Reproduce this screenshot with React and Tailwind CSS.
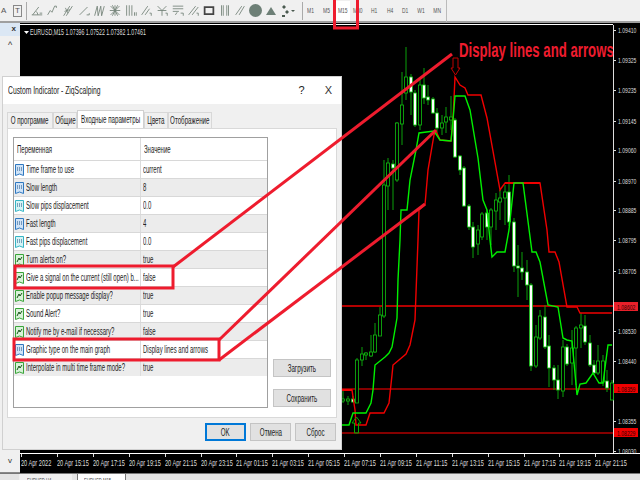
// App.jsx - MT4 chart with the indicator settings dialog on top
const FONT = "font-['Liberation_Sans',Arial,sans-serif]";

// x, wick top, body top, body bottom, wick bottom, type (h = hollow, w = white)
const candles = [
  [343, 391, 399, 401, 403, "h"], [348, 396, 399, 401, 405, "h"], [353, 396, 399, 402, 403, "w"],
  [357, 358, 360, 403, 403, "h"], [362, 347, 354, 360, 366, "h"], [366, 352, 353, 355, 360, "h"],
  [371, 335, 352, 356, 357, "h"], [375, 323, 335, 352, 353, "h"], [380, 307, 315, 336, 336, "h"],
  [384, 160, 185, 316, 318, "h"], [388, 158, 163, 186, 210, "h"], [393, 160, 164, 168, 210, "w"],
  [397, 122, 123, 180, 182, "h"], [402, 72, 105, 124, 145, "h"], [406, 47, 77, 93, 100, "h"],
  [411, 74, 77, 92, 115, "w"], [415, 90, 93, 125, 127, "w"], [420, 80, 85, 125, 130, "h"],
  [424, 68, 85, 98, 104, "w"], [428, 85, 97, 100, 105, "w"], [433, 97, 99, 113, 114, "w"],
  [437, 108, 113, 128, 135, "w"], [442, 115, 123, 128, 135, "h"], [446, 107, 117, 122, 133, "h"],
  [451, 96, 117, 120, 130, "h"], [455, 118, 120, 157, 158, "w"], [460, 155, 156, 170, 175, "w"],
  [464, 166, 168, 206, 207, "w"], [469, 204, 206, 227, 230, "w"], [473, 222, 227, 247, 258, "w"],
  [478, 225, 230, 244, 255, "h"], [482, 212, 214, 237, 240, "h"], [487, 210, 213, 227, 240, "w"],
  [491, 208, 210, 227, 245, "h"], [496, 193, 200, 211, 230, "h"], [500, 190, 198, 202, 220, "h"],
  [505, 185, 192, 198, 225, "h"], [509, 175, 192, 222, 226, "w"], [514, 218, 222, 266, 272, "w"],
  [518, 245, 266, 268, 297, "w"], [522, 252, 268, 272, 280, "w"], [527, 260, 272, 285, 300, "w"],
  [531, 283, 285, 366, 371, "w"], [536, 325, 337, 366, 368, "h"], [540, 310, 316, 338, 340, "h"],
  [545, 305, 317, 347, 349, "w"], [549, 335, 346, 368, 387, "w"], [554, 365, 368, 380, 390, "w"],
  [558, 365, 380, 390, 399, "w"], [563, 340, 347, 391, 397, "h"], [567, 344, 347, 364, 366, "w"],
  [572, 330, 348, 363, 385, "h"], [576, 326, 328, 348, 385, "h"], [581, 313, 325, 328, 348, "h"],
  [585, 315, 326, 342, 345, "w"], [590, 335, 343, 365, 367, "w"], [594, 360, 365, 373, 375, "w"],
  [598, 345, 361, 373, 375, "h"], [603, 355, 361, 382, 386, "h"], [607, 370, 381, 388, 392, "w"],
  [612, 380, 383, 400, 400, "h"],
];

const redLine =
  "340,390 352,390 355,410 356,425 366,425 370,413 384,413 389,403 392,375 393,365 406,354 410,345 415,320 418,240 419,210 425,205 428,170 434,135 436,131 440,140 451,141 453,120 455,77 460,85 465,88 468,95 481,95 487,118 500,190 505,183 540,183 547,230 549,252 555,252 559,262 567,307 577,307 580,313 612,313";

const greenLine =
  "340,425 349,425 353,413 366,413 371,403 373,390 375,365 385,357 389,353 392,347 397,318 398,280 400,240 401,210 407,210 410,180 416,150 419,133 434,131 440,140 451,141 453,120 455,96 465,96 470,110 478,158 483,200 487,210 490,240 492,257 497,252 505,252 509,230 512,202 514,183 523,183 532,252 536,252 540,262 548,305 558,307 563,338 567,340 572,341 577,395 580,384 586,383 593,373 599,383 603,383 608,345 612,345";

const priceLabels = [
  ["1.09410", 30], ["1.09325", 60], ["1.09235", 90], ["1.09145", 121], ["1.09060", 150],
  ["1.08970", 181], ["1.08885", 210], ["1.08795", 240], ["1.08705", 271], ["1.08530", 331],
  ["1.08440", 361], ["1.08355", 421], ["1.08030", 451],
];

const priceTags = [
  ["1.08602", 302, "#e8202a"],
  ["1.08359", 384, "#f00000"],
  ["1.08229", 428, "#f00000"],
];

const times = [
  "20 Apr 15:15", "20 Apr 17:15", "20 Apr 19:15", "20 Apr 21:15", "20 Apr 23:15",
  "21 Apr 01:15", "21 Apr 03:15", "21 Apr 05:15", "21 Apr 07:15", "21 Apr 09:15",
  "21 Apr 11:15", "21 Apr 13:15", "21 Apr 15:15", "21 Apr 17:15", "21 Apr 19:15", "21 Apr 21:15",
];

const periods = ["M1", "M5", "M15", "M30", "H1", "H4", "D1", "W1", "MN"];

const rows = [
  ["int", "Time frame to use", "current"],
  ["int", "Slow length", "8"],
  ["dbl", "Slow pips displacement", "0.0"],
  ["int", "Fast length", "4"],
  ["dbl", "Fast pips displacement", "0.0"],
  ["bool", "Turn alerts on?", "true"],
  ["bool", "Give a signal on the current (still open) b...", "false"],
  ["bool", "Enable popup message display?", "true"],
  ["bool", "Sound Alert?", "true"],
  ["bool", "Notify me by e-mail if necessary?", "false"],
  ["int", "Graphic type on the main graph", "Display lines and arrows"],
  ["bool", "Interpolate in multi time frame mode?", "true"],
];

const tabs = [
  ["О программе", "w-[46px]"],
  ["Общие", "w-[24px]"],
  ["Входные параметры", "w-[67px]"],
  ["Цвета", "w-[24px]"],
  ["Отображение", "w-[44px]"],
];

// toolbar drawing tools, left to right
const toolPaths = [
  "M2 13h12M3 13l7-9M9 13a6 6 0 0 0-2-4M11 11h3",
  "M3 13l3-5 2 2 3-7M11 3h2v2",
  "M3 14l7-11M6 14l7-11M4 9l6-2M5 5l3 6",
  "M3 13l9-9M11 13h3v-2",
  "M3 14l3-11 1 11 3-11 1 11 3-11",
  "M3 3l10 10M13 3L3 13M8 2v12M2 8h12M5 2l6 12M11 2L5 14",
  "M3 2v12M6 2v12M9 2v12M12 10v4M14 10v4",
  "M3 13l7-10M7 13l5-7M12 11h2v3",
  "M3 3l5 5 5-5M8 8v6M3 8h10M12 11h2v3",
  "M2 3h12M2 6h12M2 9h7M5 13l2-3M11 11h3v3",
  "M3 13l8-10M7 13l7-9M12 11h2v3",
  "M3 4h10v8H3z",
  "M4 2v12M6 2v12M10 2v12M12 2v12",
  "M3 13l7-10M7 13l6-10",
];

// the reference is a horizontally squeezed screenshot, so its text is narrow
function Squeezed({ children }) {
  return <span className="inline-block origin-left scale-x-[.6] whitespace-nowrap">{children}</span>;
}

function SqueezedCenter({ children }) {
  return <span className="inline-block shrink-0 origin-center scale-x-[.62] whitespace-nowrap">{children}</span>;
}

function ToolCell({ children }) {
  return <div className="flex h-[16px] w-[15.65px] items-center justify-center">{children}</div>;
}

function Toolbar() {
  return (
    <div className="flex h-[23px] items-center border-b-2 border-[#9f9f9f] bg-[#f0f0f0] text-[8px] text-[#555]">
      <span className="w-[10px] pl-[1px]">A</span>
      <span className="ml-[3px] flex h-[12px] w-[9px] items-center justify-center border border-[#888]">T</span>
      <span className="ml-[4px] h-[18px] w-px bg-[#aaa]" />
      <div className="ml-[2px] flex items-center">
        {toolPaths.map((d) => (
          <ToolCell key={d}>
            <svg width="14" height="15" viewBox="0 0 16 16" fill="none" stroke={d.startsWith("M3 4h") ? "#444" : "#76857a"} strokeWidth={d.startsWith("M3 4h") ? 2 : 1}>
              <path d={d} />
            </svg>
          </ToolCell>
        ))}
        <ToolCell>
          <span className="h-[13px] w-[13px] rounded-full bg-[#6d7f76]" />
        </ToolCell>
        <ToolCell>
          <span className="h-0 w-0 border-x-[5px] border-b-[8px] border-x-transparent border-b-[#6d7f76]" />
        </ToolCell>
        <ToolCell>
          <svg width="15" height="14" viewBox="0 0 15 14" fill="#4a5a50">
            <path d="M2 3l2-2 2 2-2 2zM5 8l2-2 2 2-2 2zM2 11h3v2H2z" />
            <path d="M11 6h4l-2 2z" />
          </svg>
        </ToolCell>
      </div>
      <span className="ml-[7px] h-[18px] w-px bg-[#aaa]" />
      <div className="flex items-center">
        {periods.map((p) => (
          <span
            key={p}
            className={
              p === "M15"
                ? "flex h-[20px] w-[15.8px] items-center justify-center bg-white"
                : "flex h-[20px] w-[15.8px] items-center justify-center"
            }
          >
            <SqueezedCenter>{p}</SqueezedCenter>
          </span>
        ))}
      </div>
      <span className="ml-px h-[22px] w-px bg-[#bbb]" />
    </div>
  );
}

function Sidebar() {
  return (
    <div className="flex h-full w-[20px] shrink-0 flex-col border-b border-[#888] bg-[#f0f0f0] text-[#333]">
      <div className="flex h-[13px] justify-end bg-[#dbe7f4] pr-[4px] text-[8px] font-bold">x</div>
      <div className="flex-1 pl-[8px] pt-[3px] text-[9px]">^</div>
      <div className="h-[17px] pl-[8px] text-[8px]">v</div>
    </div>
  );
}

function Chart() {
  return (
    <svg width="620" height="431" viewBox="20 23 620 431" className="block">
      <line x1="20" y1="24.500" x2="613" y2="24.500" stroke="#fff" />
      <line x1="613.500" y1="25" x2="613.500" y2="454" stroke="#ddd" />
      <line x1="20" y1="453.500" x2="640" y2="453.500" stroke="#fff" />

      <path d="M24 31h5l-2.500 3z" fill="#fff" />
      <text transform="translate(30 35) scale(.62 1)" fill="#ddd" fontSize="8.500">
        EURUSD,M15 1.07396 1.07522 1.07382 1.07461
      </text>

      <line x1="20" y1="306" x2="613" y2="306" stroke="#f00000" strokeWidth="1.500" />
      <line x1="20" y1="389" x2="613" y2="389" stroke="#b00000" strokeWidth="1.500" />
      <line x1="20" y1="433" x2="613" y2="433" stroke="#b00000" strokeWidth="1.500" />

      {candles.map(([x, wt, bt, bb, wb, type]) => (
        <g key={x}>
          <line x1={x} y1={wt} x2={x} y2={wb} stroke="#0aa00a" />
          <rect
            x={x - 1.5}
            y={bt}
            width="3"
            height={bb - bt}
            fill={type === "w" ? "#fff" : "#000"}
            stroke="#10c010"
            strokeWidth="0.8"
          />
        </g>
      ))}

      <polyline points={redLine} fill="none" stroke="#f00000" strokeWidth="1.400" />
      <line x1="340" y1="390" x2="352" y2="390" stroke="#f00000" strokeWidth="2" />
      <line x1="505" y1="183" x2="540" y2="183" stroke="#f00000" strokeWidth="2" />
      <polyline points={greenLine} fill="none" stroke="#00f000" strokeWidth="1.400" />

      <path d="M453 58h5v10h2l-4.500 7-4.500-7h2z" fill="none" stroke="#c00000" />
      <path d="M356.500 417l4.500 6h-2.500v10h-4v-10h-2.500z" fill="none" stroke="#00b000" />

      {priceLabels.map(([label, y]) => (
        <g key={label}>
          <line x1="613" y1={y + 0.5} x2="616" y2={y + 0.5} stroke="#ddd" />
          <text transform={`translate(618 ${y + 3}) scale(.68 1)`} fill="#ddd" fontSize="7.500">
            {label}
          </text>
        </g>
      ))}
      {priceTags.map(([label, y, color]) => (
        <g key={label}>
          <rect x="614" y={y} width="24" height="9" fill={color} />
          <text transform={`translate(617 ${y + 7.5}) scale(.68 1)`} fill="#300" fontSize="7.500">
            {label}
          </text>
        </g>
      ))}
    </svg>
  );
}

function TimeLabel({ children, className }) {
  return (
    <div className={`${className} flex shrink-0 flex-col items-start`}>
      <span className="h-[3px] w-px bg-[#ddd]" />
      <span className="inline-block origin-left scale-x-[.66] whitespace-nowrap text-[8.5px] leading-[12px]">
        {children}
      </span>
    </div>
  );
}

function TimeAxis() {
  return (
    <div className="flex h-[19px] overflow-hidden bg-black pl-px text-[#ddd]">
      <TimeLabel className="w-[36px]">20 Apr 2022</TimeLabel>
      {times.map((t) => (
        <TimeLabel key={t} className="w-[35.9px]">
          {t}
        </TimeLabel>
      ))}
    </div>
  );
}

function BottomTabs() {
  return (
    <div className="flex h-[7px] overflow-hidden border-t border-[#777] bg-[#e4e4e4] pl-[19px] text-[7px] text-[#444]">
      <div className="h-[7px] w-[53px] bg-[#f0f0f0] pl-[8px] pt-[3px] leading-[8px]">
        <Squeezed>EURUSD,H4</Squeezed>
      </div>
      <div className="ml-[5px] h-[7px] w-[49px] border-x border-[#777] bg-white pl-[6px] pt-[3px] leading-[8px]">
        <Squeezed>EURUSD,M15</Squeezed>
      </div>
    </div>
  );
}

function RowIcon({ type }) {
  const color = type === "bool" ? "#3aa53a" : type === "dbl" ? "#36b4c4" : "#2f78c0";
  const fill = type === "bool" ? "#d8f2d8" : type === "dbl" ? "#d5f3f5" : "#cfe3f7";
  return (
    <svg width="9" height="13" viewBox="0 0 9 13" className="ml-px mr-[2px] shrink-0">
      <path d="M.5 1.500h8v11l-4-1.500-4 1.500z" fill={fill} stroke={color} />
      {type === "bool" ? (
        <path d="M2 9l2-4 1 2 2-3" fill="none" stroke="#165016" />
      ) : (
        <path d="M2 7h5M2 5h5" fill="none" stroke="#1d4f80" strokeDasharray="1 1" />
      )}
    </svg>
  );
}

function ParamTable() {
  return (
    <div className="h-[271px] w-[255px] border border-[#a0a0a0] bg-white text-[10px] text-[#222]">
      <div className="flex h-[22px] items-center">
        <div className="w-[126px] pl-[3px]">
          <Squeezed>Переменная</Squeezed>
        </div>
        <div className="h-full w-px bg-[#dcdcdc]" />
        <div className="pl-[3px]">
          <Squeezed>Значение</Squeezed>
        </div>
      </div>
      {rows.map(([type, name, value], i) => (
        <div
          key={name}
          className={
            i % 2 === 1
              ? "flex h-[18px] items-center border-t border-[#d8d8d8] bg-[#ececec]"
              : "flex h-[18px] items-center border-t border-[#d8d8d8] bg-white"
          }
        >
          <div className="flex h-full w-[126px] items-center">
            <RowIcon type={type} />
            <Squeezed>{name}</Squeezed>
          </div>
          <div className="h-full w-px bg-[#dcdcdc]" />
          <div className="pl-[2px]">
            <Squeezed>{value}</Squeezed>
          </div>
        </div>
      ))}
    </div>
  );
}

function Dialog() {
  return (
    <div className="absolute left-[3px] top-[77px] flex h-[372px] w-[338px] flex-col bg-[#f0f0f0] text-[#222] shadow-[0_0_0_1px_#d0d0d0]">
      <div className="flex h-[27px] items-center justify-between bg-white pl-[5px] pr-[9px] text-[10.5px]">
        <span className="inline-block origin-left scale-x-[.645] whitespace-nowrap">Custom Indicator - ZiqScalping</span>
        <div className="flex items-center gap-[20px] text-[11px]">
          <span>?</span>
          <span className="text-[#333]">X</span>
        </div>
      </div>
      <div className="flex h-[24px] items-end pl-[4px] text-[10px]">
        {tabs.map(([label, w]) => (
          <div
            key={label}
            className={
              label === "Входные параметры"
                ? `${w} flex h-[18px] items-center justify-center border-x border-t border-[#d0d0d0] bg-white`
                : `${w} flex h-[16px] items-center justify-center border-x border-t border-[#d8d8d8] bg-[#f0f0f0]`
            }
          >
            <SqueezedCenter>{label}</SqueezedCenter>
          </div>
        ))}
      </div>
      <div className="ml-[4px] flex h-[290px] w-[330px] gap-[5px] border border-[#d9d9d9] bg-white pl-[5px] pt-[8px]">
        <ParamTable />
        <div className="flex h-[270px] flex-col justify-end gap-[12px] text-[10px]">
          <button className="flex h-[18px] w-[58px] items-center justify-center border border-[#c4c4c4] bg-[#e1e1e1]">
            <SqueezedCenter>Загрузить</SqueezedCenter>
          </button>
          <button className="flex h-[18px] w-[58px] items-center justify-center border border-[#c4c4c4] bg-[#e1e1e1]">
            <SqueezedCenter>Сохранить</SqueezedCenter>
          </button>
        </div>
      </div>
      <div className="mt-[5px] flex justify-end gap-[4px] pr-[5px] text-[10px]">
        <button className="flex h-[18px] w-[41px] items-center justify-center border-2 border-[#0078d7] bg-[#e1e1e1]">
          <SqueezedCenter>OK</SqueezedCenter>
        </button>
        <button className="flex h-[18px] w-[41px] items-center justify-center border border-[#c4c4c4] bg-[#e1e1e1]">
          <SqueezedCenter>Отмена</SqueezedCenter>
        </button>
        <button className="flex h-[18px] w-[41px] items-center justify-center border border-[#c4c4c4] bg-[#e1e1e1]">
          <SqueezedCenter>Сброс</SqueezedCenter>
        </button>
      </div>
    </div>
  );
}

// red callouts drawn over the screenshot
function Annotations() {
  return (
    <>
      <svg width="640" height="480" className="absolute left-0 top-0" fill="none" stroke="#ee1c2e" strokeWidth="3">
        <rect x="334.500" y="-3" width="23" height="31" />
        <rect x="15" y="266" width="158" height="22" />
        <rect x="14" y="339" width="205" height="21" />
        <line x1="173" y1="267" x2="452" y2="54" />
        <line x1="219" y1="340" x2="436" y2="130" />
        <line x1="219" y1="360" x2="425" y2="204" />
      </svg>
      <div className="absolute left-[459px] top-[39px] origin-left scale-x-[.66] whitespace-nowrap text-[20px] font-bold leading-[22px] text-[#ee1c2e]">
        Display lines and arrows
      </div>
    </>
  );
}

export default function App() {
  return (
    <div className={`${FONT} relative h-[480px] w-[640px] overflow-hidden bg-[#f0f0f0]`}>
      <Toolbar />
      <div className="flex h-[450px]">
        <Sidebar />
        <div className="flex-1 bg-black">
          <Chart />
          <TimeAxis />
        </div>
      </div>
      <BottomTabs />
      <Dialog />
      <Annotations />
    </div>
  );
}
